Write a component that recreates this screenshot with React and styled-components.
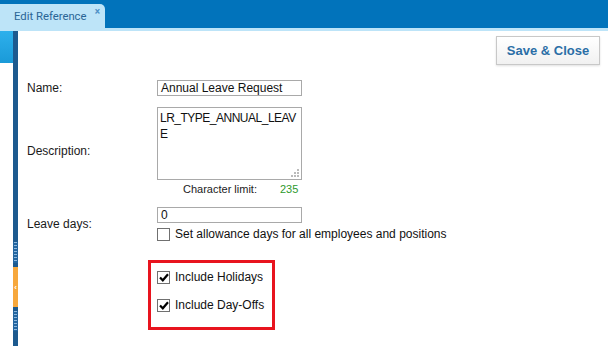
import React from "react";
import styled, { createGlobalStyle } from "styled-components";

const GlobalStyle = createGlobalStyle`
	html, body {
		margin: 0;
		padding: 0;
		background: #ffffff;
		font-family: "Liberation Sans", Arial, sans-serif;
		font-size: 12px;
		color: #1a1a1a;
	}
	* {
		box-sizing: border-box;
	}
`;

const Page = styled.div`
	width: 608px;
	height: 346px;
	display: flex;
	flex-direction: column;
	overflow: hidden;
	background: #ffffff;
`;

const TopBar = styled.div`
	height: 28px;
	background-color: #0173bb;
	display: flex;
	align-items: flex-end;
	flex-shrink: 0;
`;

const Tab = styled.div`
	width: 105px;
	height: 24px;
	background-color: #bde4f8;
	border-top-right-radius: 5px;
	display: flex;
	align-items: center;
	padding-left: 14px;
	padding-top: 1px;
	position: relative;
	font-family: Roboto, "Liberation Sans", sans-serif;
	font-size: 11.3px;
	color: #2a6596;
`;

const TabClose = styled.span`
	position: absolute;
	top: 2px;
	right: 5px;
	font-size: 10px;
	font-weight: bold;
	color: #4d8fc6;
`;

const Divider = styled.div`
	height: 3px;
	background-color: #bde4f8;
	flex-shrink: 0;
`;

const Body = styled.div`
	flex: 1;
	display: flex;
`;

const SideCol = styled.div`
	width: 13px;
	display: flex;
	flex-direction: column;
`;

const SideTop = styled.div`
	height: 32px;
	background: linear-gradient(180deg, #2eb0ec 0%, #1a9ad8 100%);
`;

const Strip = styled.div`
	width: 5px;
	display: flex;
	flex-direction: column;
	background-color: #1d5a8f;
`;

const StripPart = styled.div`
	height: ${(p) => p.h}px;
	flex: ${(p) => (p.grow ? 1 : "none")};
	background-color: ${(p) => p.bg || "#1d5a8f"};
	${(p) =>
		p.dashed &&
		`background-image: repeating-linear-gradient(180deg, #8eb8df 0 1px, transparent 1px 3px);
		background-size: 3px 100%;
		background-repeat: no-repeat;
		background-position: 1px 4px;
		background-clip: content-box;
		padding: 4px 0;`}
	display: flex;
	align-items: center;
	justify-content: center;
	color: #ffffff;
	font-size: 8px;
	font-weight: bold;
`;

const Main = styled.div`
	flex: 1;
	padding: 5px 8px 0 9px;
	display: flex;
	flex-direction: column;
`;

const ButtonRow = styled.div`
	display: flex;
	justify-content: flex-end;
`;

const SaveButton = styled.button`
	height: 29px;
	width: 104px;
	border: 1px solid #c8c8c8;
	background: linear-gradient(180deg, #ffffff 0%, #f1f1f1 100%);
	box-shadow: 0 1px 2px rgba(0, 0, 0, 0.12);
	font-family: "Liberation Sans", Arial, sans-serif;
	font-size: 13px;
	font-weight: bold;
	color: #2b6ea6;
	padding: 0;
`;

const Form = styled.div`
	display: grid;
	grid-template-columns: 130px 1fr;
	margin-top: 15px;
	align-items: center;
`;

const Label = styled.div`
	font-size: 12px;
	color: #1a1a1a;
	margin-top: ${(p) => p.mt || 0}px;
`;

const Field = styled.div`
	display: flex;
	flex-direction: column;
	margin-top: ${(p) => p.mt || 0}px;
`;

const TextInput = styled.div`
	width: 145px;
	height: 16px;
	border: 1px solid #a9a9a9;
	padding: 0 3px;
	line-height: 14px;
	font-size: 12px;
	color: #111;
`;

const TextArea = styled.div`
	width: 145px;
	height: 73px;
	border: 1px solid #a9a9a9;
	padding: 2px 3px 2px 2px;
	line-height: 16px;
	font-size: 12px;
	letter-spacing: -0.5px;
	color: #111;
	word-break: break-all;
	position: relative;
`;

const Grip = styled.svg`
	position: absolute;
	right: 2px;
	bottom: 2px;
`;

const LimitRow = styled.div`
	display: flex;
	margin-top: 3px;
	padding-left: 26px;
	font-size: 11px;
	color: #222;
`;

const LimitValue = styled.span`
	margin-left: 23px;
	color: #2d9a2d;
`;

const CheckRow = styled.div`
	display: flex;
	align-items: center;
	gap: 5px;
	margin-top: ${(p) => p.mt || 0}px;
	font-size: 12px;
	color: #111;
`;

const Box = styled.span`
	width: 13px;
	height: 13px;
	border: 1px solid #707070;
	background: #ffffff;
	display: flex;
	align-items: center;
	justify-content: center;
`;

const Highlight = styled.div`
	grid-column: 2;
	margin-left: -9px;
	margin-top: 19px;
	width: 127px;
	height: 70px;
	border: 3px solid #e8141e;
	padding: 7px 0 0 6px;
	display: flex;
	flex-direction: column;
`;

function Check({ checked, children, mt }) {
	return (
		<CheckRow mt={mt}>
			<Box>
				{checked && (
					<svg width="10" height="9" viewBox="0 0 10 9">
						<path d="M1 4.5 L3.8 7.3 L9 1.2" fill="none" stroke="#000" strokeWidth="2.2" />
					</svg>
				)}
			</Box>
			{children}
		</CheckRow>
	);
}

export default function App() {
	return (
		<Page>
			<GlobalStyle />
			<TopBar>
				<Tab>
					Edit Reference
					<TabClose>×</TabClose>
				</Tab>
			</TopBar>
			<Divider />
			<Body>
				<SideCol>
					<SideTop />
				</SideCol>
				<Strip>
					<StripPart grow />
					<StripPart h={29} bg="#2466a0" dashed />
					<StripPart h={40} bg="#f7a83c">
						‹
					</StripPart>
					<StripPart h={28} bg="#2466a0" dashed />
					<StripPart h={11} />
				</Strip>
				<Main>
					<ButtonRow>
						<SaveButton>Save &amp; Close</SaveButton>
					</ButtonRow>
					<Form>
						<Label>Name:</Label>
						<Field>
							<TextInput>Annual Leave Request</TextInput>
						</Field>

						<Label mt={11}>Description:</Label>
						<Field mt={11}>
							<TextArea>
								LR_TYPE_ANNUAL_LEAVE
								<Grip width="8" height="8" viewBox="0 0 8 8">
									<rect x="6" y="0" width="2" height="2" fill="#bbb" />
									<rect x="3" y="3" width="2" height="2" fill="#bbb" />
									<rect x="6" y="3" width="2" height="2" fill="#bbb" />
									<rect x="0" y="6" width="2" height="2" fill="#bbb" />
									<rect x="3" y="6" width="2" height="2" fill="#bbb" />
									<rect x="6" y="6" width="2" height="2" fill="#bbb" />
								</Grip>
							</TextArea>
							<LimitRow>
								Character limit:
								<LimitValue>235</LimitValue>
							</LimitRow>
						</Field>

						<Label mt={12}>Leave days:</Label>
						<Field mt={12}>
							<TextInput>0</TextInput>
							<Check mt={4}>Set allowance days for all employees and positions</Check>
						</Field>

						<Highlight>
							<Check checked>Include Holidays</Check>
							<Check checked mt={14}>
								Include Day-Offs
							</Check>
						</Highlight>
					</Form>
				</Main>
			</Body>
		</Page>
	);
}
